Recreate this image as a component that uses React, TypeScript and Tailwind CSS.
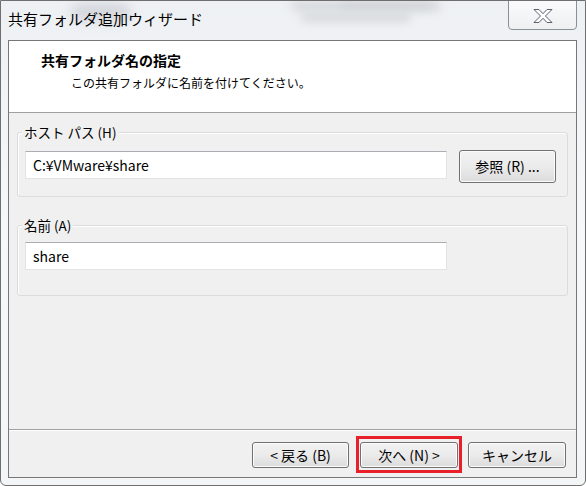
import React from 'react';

const font = { fontFamily: '"Noto Sans CJK JP", "Noto Sans", sans-serif' };

const WinButton = ({ children, className = '' }: { children: React.ReactNode; className?: string }) => (
	<div
		className={`flex items-center justify-center rounded-[3px] border border-[#707070] bg-gradient-to-b from-[#f2f2f2] via-[#ebebeb] to-[#dcdcdc] text-[14px] text-black shadow-[inset_0_0_0_1px_#fcfcfc] ${className}`}
	>
		{children}
	</div>
);

const GroupBox = ({ label, children, className = '' }: { label: string; children: React.ReactNode; className?: string }) => (
	<div className={`relative rounded-[3px] border border-[#dcdcdc] shadow-[inset_1px_1px_0_#ffffff] ${className}`}>
		<span className="absolute -top-[11px] left-[4px] bg-[#f0f0f0] px-[2px] text-[13.5px] leading-[20px] text-black">
			{label}
		</span>
		{children}
	</div>
);

const TextBox = ({ value }: { value: string }) => (
	<div className="flex h-[28px] w-[422px] items-center border border-[#e3e3e3] border-t-[#abadb3] bg-white pl-[7px] text-[14px] text-black">
		{value}
	</div>
);

const App = () => {
	return (
		<div
			className="relative flex h-[486px] w-[586px] flex-col overflow-hidden rounded-b-[6px] border border-[#6f6f6f] bg-gradient-to-b from-[#eef1f4] via-[#f7f8fa] to-[#f3f5f7]"
			style={font}
		>
			{/* blurred glass background */}
			<div className="pointer-events-none absolute left-[70px] top-[2px] h-[18px] w-[60px] rounded-full bg-[#b9bcc4] opacity-50 blur-[6px]" />
			<div className="pointer-events-none absolute left-[290px] top-[0px] h-[10px] w-[150px] rounded-full bg-[#c4c7cc] opacity-60 blur-[5px]" />
			<div className="pointer-events-none absolute left-[300px] top-[13px] h-[8px] w-[110px] rounded-full bg-[#c4c7cc] opacity-60 blur-[4px]" />
			<div className="pointer-events-none absolute left-[340px] top-[0px] h-[8px] w-[90px] rounded-full bg-[#c9ccd0] opacity-50 blur-[5px]" />

			{/* title bar */}
			<div className="relative flex h-[39px] shrink-0 items-start">
				<span className="ml-[7px] mt-[6px] text-[15px] leading-[24px] text-black">共有フォルダ追加ウィザード</span>
				<div className="absolute right-[8px] -top-[4px] flex h-[33px] w-[69px] items-center justify-center rounded-b-[4px] border border-[#8b8f96] bg-gradient-to-b from-[#fbfbfc] to-[#eef0f2] pt-[4px]">
					<svg width="22" height="16" viewBox="0 0 22 16">
						<path
							d="M2 1.5h5l4 4.2 4-4.2h5l-6.5 6.5 6.5 6.5h-5l-4-4.2-4 4.2H2l6.5-6.5z"
							fill="#ffffff"
							stroke="#58616c"
							strokeWidth="1"
							strokeLinejoin="round"
						/>
					</svg>
				</div>
			</div>

			{/* client area */}
			<div className="ml-[7px] mr-[8px] mb-[7px] flex flex-1 flex-col border border-[#777777] bg-[#f0f0f0]">
				{/* header */}
				<div className="flex h-[72px] shrink-0 flex-col border-b border-[#a0a0a0] bg-white">
					<span className="ml-[32px] mt-[8px] text-[14px] font-bold leading-[22px] text-black">共有フォルダ名の指定</span>
					<span className="ml-[62px] mt-[2px] text-[12px] leading-[20px] text-black">この共有フォルダに名前を付けてください。</span>
				</div>

				{/* body */}
				<div className="flex flex-1 flex-col px-[8px] pt-[19px]">
					<GroupBox label="ホスト パス (H)" className="h-[65px]">
						<div className="flex items-start pl-[7px] pt-[18px]">
							<TextBox value="C:¥VMware¥share" />
							<WinButton className="ml-[12px] -mt-[1px] h-[33px] w-[97px]">参照 (R) ...</WinButton>
						</div>
					</GroupBox>
					<GroupBox label="名前 (A)" className="mt-[28px] h-[71px]">
						<div className="flex items-start pl-[7px] pt-[16px]">
							<TextBox value="share" />
						</div>
					</GroupBox>
				</div>

				{/* footer */}
				<div className="flex h-[48px] shrink-0 items-start justify-end border-t border-[#a0a0a0] pr-[10px] pt-[12px] shadow-[inset_0_1px_0_#ffffff]">
					<WinButton className="h-[26px] w-[97px]">&lt; 戻る (B)</WinButton>
					<div className="ml-[7px] -mt-[6px] border-[3px] border-[#e8202a] px-[1px] pb-[2px] pt-[3px]">
						<WinButton className="h-[26px] w-[98px]">次へ (N) &gt;</WinButton>
					</div>
					<WinButton className="ml-[6px] h-[26px] w-[98px]">キャンセル</WinButton>
				</div>
			</div>
		</div>
	);
};

export default App;
